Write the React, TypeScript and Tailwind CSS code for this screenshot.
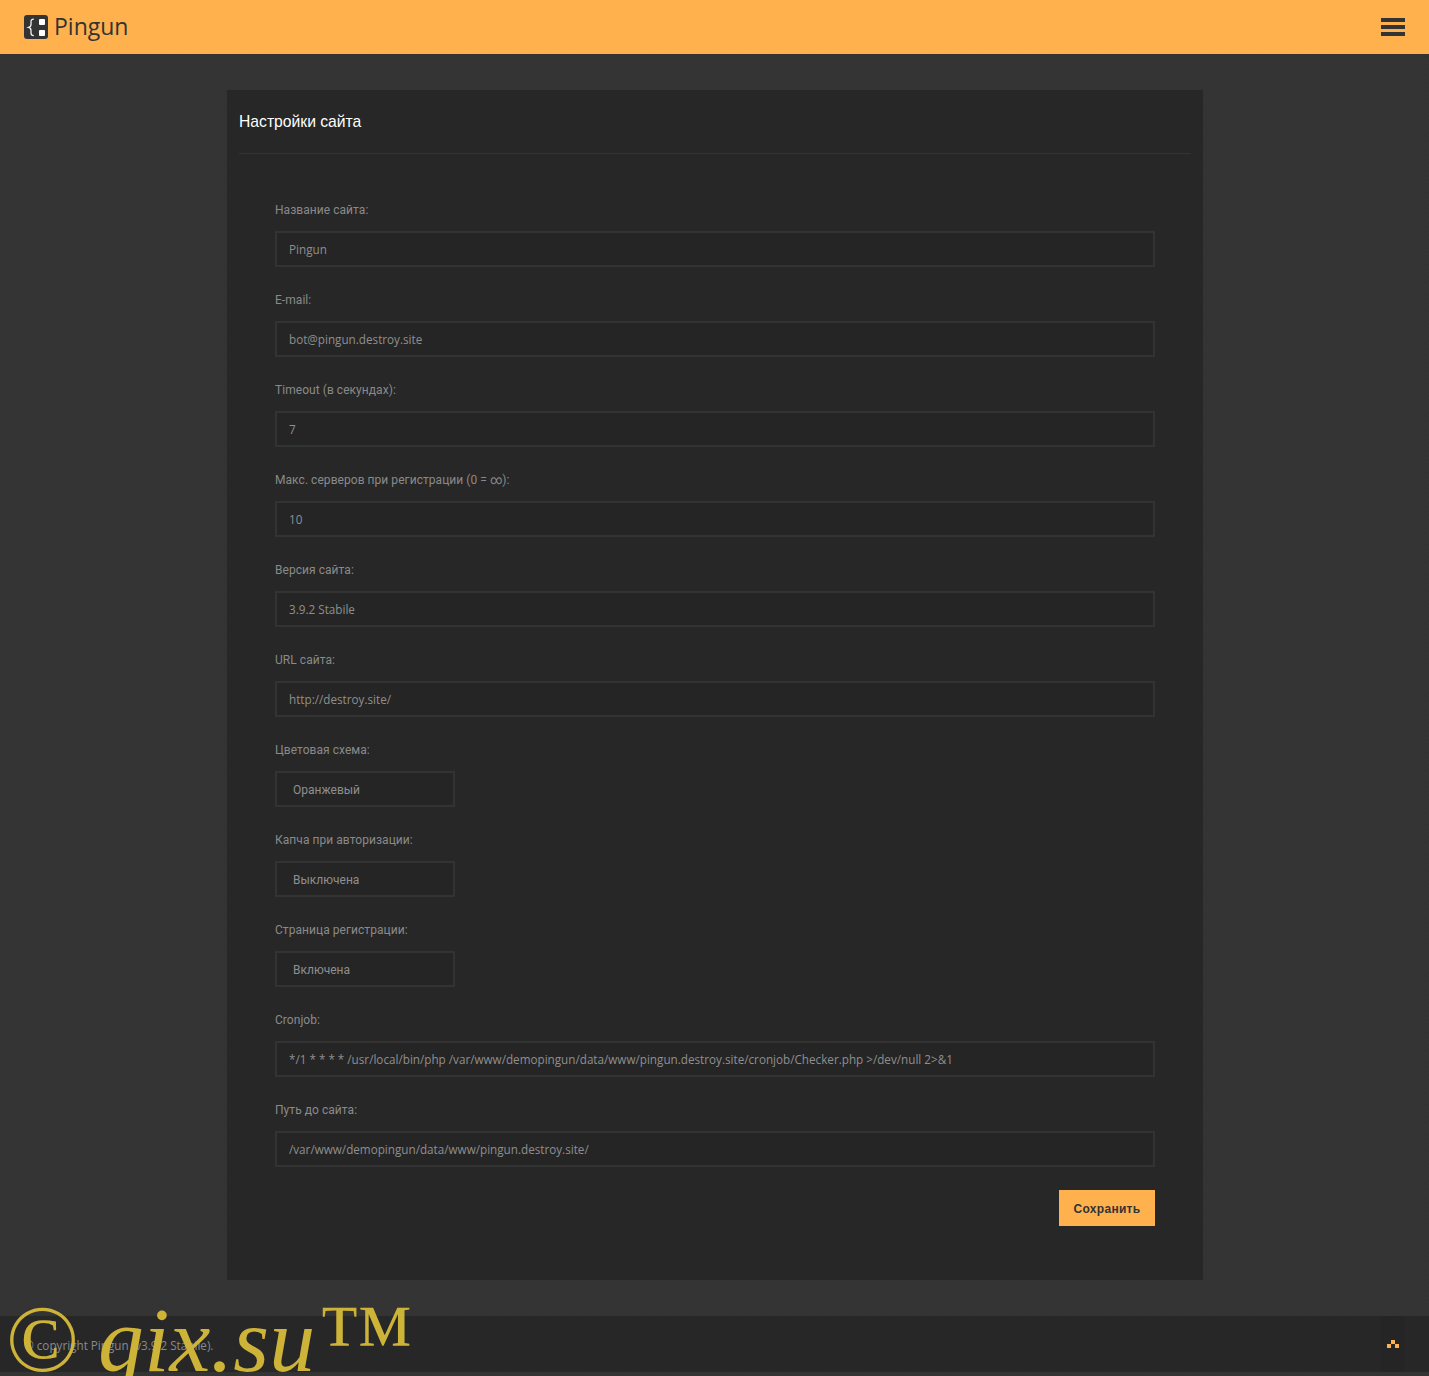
const textFields = {
  top: [
    { label: "Название сайта:", value: "Pingun" },
    { label: "E-mail:", value: "bot@pingun.destroy.site" },
    { label: "Timeout (в секундах):", value: "7" },
    { label: "Макс. серверов при регистрации (0 = ∞):", value: "10" },
    { label: "Версия сайта:", value: "3.9.2 Stabile" },
    { label: "URL сайта:", value: "http://destroy.site/" },
  ],
  selects: [
    { label: "Цветовая схема:", value: "Оранжевый" },
    { label: "Капча при авторизации:", value: "Выключена" },
    { label: "Страница регистрации:", value: "Включена" },
  ],
  bottom: [
    {
      label: "Cronjob:",
      value:
        "*/1 * * * * /usr/local/bin/php /var/www/demopingun/data/www/pingun.destroy.site/cronjob/Checker.php >/dev/null 2>&1",
    },
    { label: "Путь до сайта:", value: "/var/www/demopingun/data/www/pingun.destroy.site/" },
  ],
};

function Field({ label, value }: { label: string; value: string }) {
  return (
    <div className="mb-[22px]">
      <label className="mb-[12px] block h-[20px] font-['Roboto',sans-serif] text-[12px] leading-[22px] tracking-[0.05px] text-[#8a8a8a]">
        {label}
      </label>
      <input
        readOnly
        value={value}
        className="block h-[36px] w-full border-2 border-[#333333] bg-[#252525] px-[12px] font-['Open_Sans',sans-serif] text-[11.7px] text-[#8f8f8f] outline-none"
      />
    </div>
  );
}

function SelectField({ label, value }: { label: string; value: string }) {
  return (
    <div className="mb-[22px]">
      <label className="mb-[12px] block h-[20px] font-['Roboto',sans-serif] text-[12px] leading-[22px] tracking-[0.05px] text-[#8a8a8a]">
        {label}
      </label>
      <select
        defaultValue={value}
        className="block h-[36px] w-[180px] appearance-none border-2 border-[#333333] bg-[#252525] pl-[16px] pr-[8px] pt-[2px] font-['Roboto',sans-serif] text-[12px] text-[#8f8f8f] outline-none"
      >
        <option>{value}</option>
      </select>
    </div>
  );
}

export default function App() {
  return (
    <div className="relative h-[1376px] overflow-hidden bg-[#343434] bg-[repeating-linear-gradient(45deg,#353535_0,#353535_1px,#333333_1px,#333333_3px)] font-['Open_Sans',sans-serif]">
      {/* Header */}
      <header className="flex h-[54px] items-center justify-between bg-[#ffb14e] px-[24px]">
        <div className="flex items-center gap-[6px]">
          <svg width="24" height="24" viewBox="0 0 24 24">
            <rect width="24" height="24" rx="3" fill="#333333" />
            <path
              d="M9.8 4.2c-2 0-2.8 1-2.8 2.6v2.6c0 1.5-.6 2.5-2.4 3 1.8.5 2.4 1.5 2.4 3v2.7c0 1.6.8 2.6 2.8 2.6"
              fill="none"
              stroke="#f2f2f2"
              strokeWidth="1.3"
            />
            <rect x="15" y="4" width="6" height="6" rx="1" fill="#ffffff" />
            <rect x="15" y="15" width="6" height="6" rx="1" fill="#ffffff" />
          </svg>
          <span className="-mt-[1px] text-[23px] leading-none text-[#333333]">Pingun</span>
        </div>
        <div className="flex w-[24px] flex-col gap-[3px]">
          <div className="h-[4px] bg-[#333333]" />
          <div className="h-[4px] bg-[#333333]" />
          <div className="h-[4px] bg-[#333333]" />
        </div>
      </header>

      {/* Settings card */}
      <main className="ml-[227px] mt-[36px] h-[1190px] w-[976px] bg-[#272727] px-[12px]">
        <div className="flex h-[64px] items-center border-b border-[#333333]">
          <h1 className="font-['Liberation_Sans',sans-serif] text-[15.7px] text-white">Настройки сайта</h1>
        </div>
        <form className="px-[36px] pt-[45px]">
          {textFields.top.map((f) => (
            <Field key={f.label} {...f} />
          ))}
          {textFields.selects.map((f) => (
            <SelectField key={f.label} {...f} />
          ))}
          {textFields.bottom.map((f) => (
            <Field key={f.label} {...f} />
          ))}
          <div className="mt-[23px] flex justify-end">
            <button
              type="button"
              className="h-[36px] w-[96px] bg-[#ffb14e] pt-[2px] font-['Liberation_Sans',sans-serif] text-[12px] font-bold tracking-[0.3px] text-[#333333]"
            >
              Сохранить
            </button>
          </div>
        </form>
      </main>

      {/* Footer */}
      <footer className="mt-[36px] flex h-[56px] items-center justify-between bg-[#272727] px-[24px]">
        <span className="pt-[3px] text-[11.7px] text-[#858a8f]">© copyright Pingun (v3.9.2 Stabile).</span>
        <div className="flex h-full w-[24px] items-center justify-center bg-[#252525]">
          <svg width="12" height="8" viewBox="0 0 12 8" fill="#ffb14e">
            <rect x="4" y="0" width="4" height="4" />
            <rect x="0" y="4" width="4" height="4" />
            <rect x="8" y="4" width="4" height="4" />
          </svg>
        </div>
      </footer>

      {/* Watermark */}
      <div className="pointer-events-none absolute bottom-[-14px] left-[6px] whitespace-pre font-['Liberation_Serif',serif] text-[92px] leading-[100px] text-[#cdb338]">
        <span className="mr-[19px] text-[96px]">©</span>
        <span className="italic">gix.su</span>
        <span className="ml-[3px] text-[97px]">™</span>
      </div>
    </div>
  );
}
